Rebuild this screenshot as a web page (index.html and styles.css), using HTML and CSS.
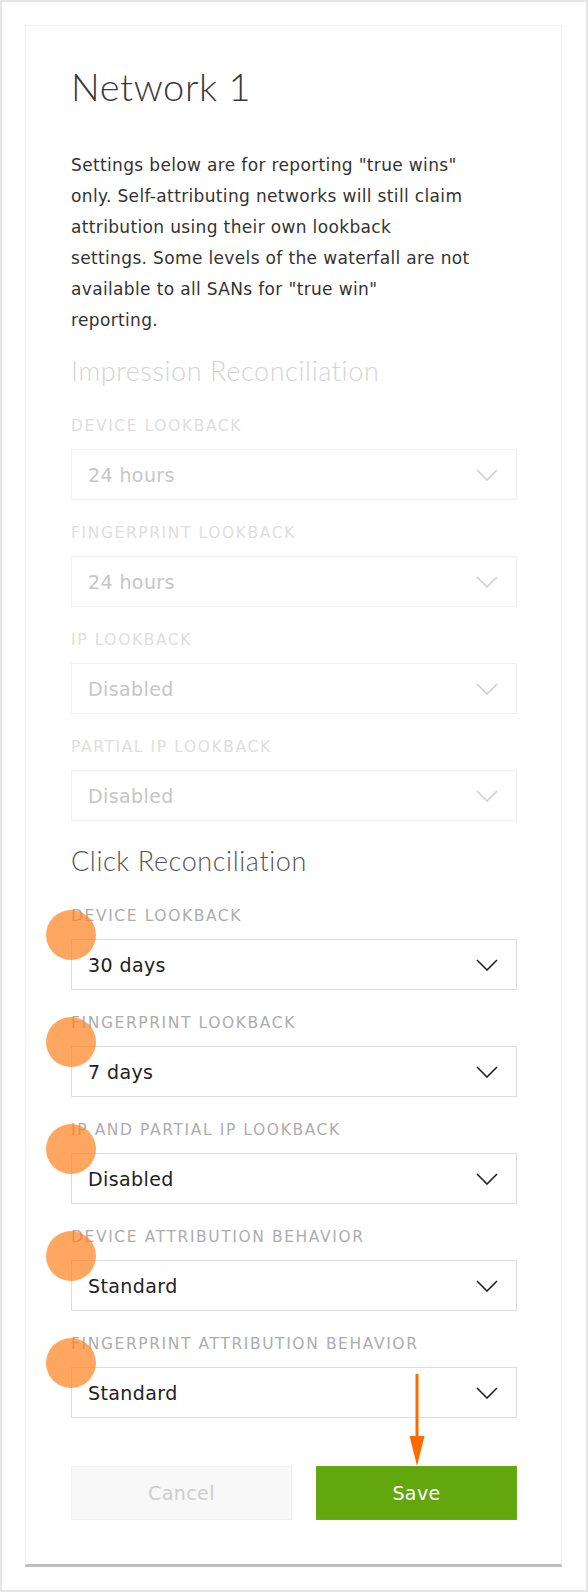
FILE: index.html
```html
<!DOCTYPE html>
<html lang="en">
<head>
<meta charset="utf-8">
<title>Network 1</title>
<link rel="stylesheet" href="styles.css">
</head>
<body>
<div class="frame">
  <div class="card">
    <h1 class="title">Network 1</h1>
    <p class="intro">Settings below are for reporting "true wins"<br>only. Self-attributing networks will still claim<br>attribution using their own lookback<br>settings. Some levels of the waterfall are not<br>available to all SANs for "true win"<br>reporting.</p>

    <section class="group group-disabled">
      <h2 class="group-title">Impression Reconciliation</h2>
      <div class="field">
        <div class="field-label">DEVICE LOOKBACK</div>
        <div class="select"><span class="select-value">24 hours</span><svg class="chev" viewBox="0 0 22 12" width="22" height="12"><polyline points="1,1 11,11 21,1"/></svg></div>
      </div>
      <div class="field">
        <div class="field-label">FINGERPRINT LOOKBACK</div>
        <div class="select"><span class="select-value">24 hours</span><svg class="chev" viewBox="0 0 22 12" width="22" height="12"><polyline points="1,1 11,11 21,1"/></svg></div>
      </div>
      <div class="field">
        <div class="field-label">IP LOOKBACK</div>
        <div class="select"><span class="select-value">Disabled</span><svg class="chev" viewBox="0 0 22 12" width="22" height="12"><polyline points="1,1 11,11 21,1"/></svg></div>
      </div>
      <div class="field">
        <div class="field-label">PARTIAL IP LOOKBACK</div>
        <div class="select"><span class="select-value">Disabled</span><svg class="chev" viewBox="0 0 22 12" width="22" height="12"><polyline points="1,1 11,11 21,1"/></svg></div>
      </div>
    </section>

    <section class="group group-active">
      <h2 class="group-title">Click Reconciliation</h2>
      <div class="field">
        <span class="dot"></span>
        <div class="field-label">DEVICE LOOKBACK</div>
        <div class="select"><span class="select-value">30 days</span><svg class="chev" viewBox="0 0 22 12" width="22" height="12"><polyline points="1,1 11,11 21,1"/></svg></div>
      </div>
      <div class="field">
        <span class="dot"></span>
        <div class="field-label">FINGERPRINT LOOKBACK</div>
        <div class="select"><span class="select-value">7 days</span><svg class="chev" viewBox="0 0 22 12" width="22" height="12"><polyline points="1,1 11,11 21,1"/></svg></div>
      </div>
      <div class="field">
        <span class="dot"></span>
        <div class="field-label">IP AND PARTIAL IP LOOKBACK</div>
        <div class="select"><span class="select-value">Disabled</span><svg class="chev" viewBox="0 0 22 12" width="22" height="12"><polyline points="1,1 11,11 21,1"/></svg></div>
      </div>
      <div class="field">
        <span class="dot"></span>
        <div class="field-label">DEVICE ATTRIBUTION BEHAVIOR</div>
        <div class="select"><span class="select-value">Standard</span><svg class="chev" viewBox="0 0 22 12" width="22" height="12"><polyline points="1,1 11,11 21,1"/></svg></div>
      </div>
      <div class="field field-last">
        <span class="dot"></span>
        <div class="field-label">FINGERPRINT ATTRIBUTION BEHAVIOR</div>
        <div class="select"><span class="select-value">Standard</span><svg class="chev" viewBox="0 0 22 12" width="22" height="12"><polyline points="1,1 11,11 21,1"/></svg></div>
      </div>
    </section>

    <div class="actions">
      <button class="btn btn-cancel" type="button">Cancel</button>
      <button class="btn btn-save" type="button">Save</button>
      <svg class="arrow" viewBox="0 0 16 92" width="16" height="92"><rect x="6.5" y="0" width="3" height="66"/><polygon points="0.5,62 15.5,62 8,92"/></svg>
    </div>
  </div>
</div>
</body>
</html>
```

FILE: styles.css
```css
* { box-sizing: border-box; }

html, body {
  margin: 0;
  padding: 0;
  background: #ffffff;
}

body {
  font-family: "DejaVu Sans", "Open Sans", sans-serif;
  color: #333333;
}

.frame {
  width: 588px;
  height: 1592px;
  border: 2px solid #e6e6e6;
  padding: 23px 24px 23px 23px;
  background: #ffffff;
}

.card {
  width: 537px;
  height: 1542px;
  border: 1px solid #f0f0f0;
  border-bottom: 3px solid #bdbdbd;
  padding: 38px 44px 44px 45px;
  display: flex;
  flex-direction: column;
}

.title {
  margin: 0;
  font-family: "Lato", "Open Sans", sans-serif;
  font-weight: 300;
  font-size: 38px;
  line-height: 44px;
  letter-spacing: 0.6px;
  color: #3a3a3a;
}

.intro {
  margin: 42px 0 0 0;
  font-size: 17px;
  line-height: 31px;
  letter-spacing: 0.35px;
  white-space: nowrap;
  color: #333333;
}

.group {
  display: flex;
  flex-direction: column;
}

.group-disabled { margin-top: 19px; }

.group-title {
  margin: 0 0 30px 0;
  font-family: "Lato", "Open Sans", sans-serif;
  font-weight: 300;
  font-size: 27px;
  line-height: 32px;
  letter-spacing: 0.6px;
}

.group-disabled .group-title { color: #d4d4d4; }
.group-active .group-title { color: #555555; }

.field {
  position: relative;
  margin-bottom: 24px;
}

.field-last { margin-bottom: 0; }

.field-label {
  font-size: 15.5px;
  line-height: 18px;
  letter-spacing: 1.6px;
  margin-bottom: 14px;
  white-space: nowrap;
}

.group-disabled .field-label { color: #dedede; }
.group-active .field-label { color: #adadad; }

.select {
  height: 51px;
  display: flex;
  align-items: center;
  justify-content: space-between;
  padding: 0 18px 0 16px;
  border: 1px solid #dddddd;
  background: #ffffff;
}

.group-disabled .select { border-color: #f0f0f0; }

.select-value {
  font-size: 19px;
  letter-spacing: 0.4px;
}

.group-disabled .select-value { color: #c6c6c6; }
.group-active .select-value { color: #222222; }

.chev {
  fill: none;
  stroke-width: 1.6;
  margin-top: 1px;
}

.group-disabled .chev { stroke: #cfcfcf; }
.group-active .chev { stroke: #222222; }

.dot {
  position: absolute;
  left: -25px;
  top: 3px;
  width: 50px;
  height: 50px;
  border-radius: 50%;
  background: rgba(255, 128, 30, 0.7);
  z-index: 2;
}

.actions {
  position: relative;
  margin-top: 48px;
  display: grid;
  grid-template-columns: 221px 1fr;
  column-gap: 24px;
}

.btn {
  height: 54px;
  font-family: "DejaVu Sans", "Open Sans", sans-serif;
  font-size: 19px;
  letter-spacing: 0.4px;
  border: 1px solid transparent;
  padding: 0;
}

.btn-cancel {
  background: #f8f8f8;
  border-color: #f1f1f1;
  color: #cdcdcd;
}

.btn-save {
  background: #63a70f;
  border-color: #67ab14;
  color: #ffffff;
}

.arrow {
  position: absolute;
  left: 338px;
  top: -92px;
  fill: #ff6a00;
}
```
